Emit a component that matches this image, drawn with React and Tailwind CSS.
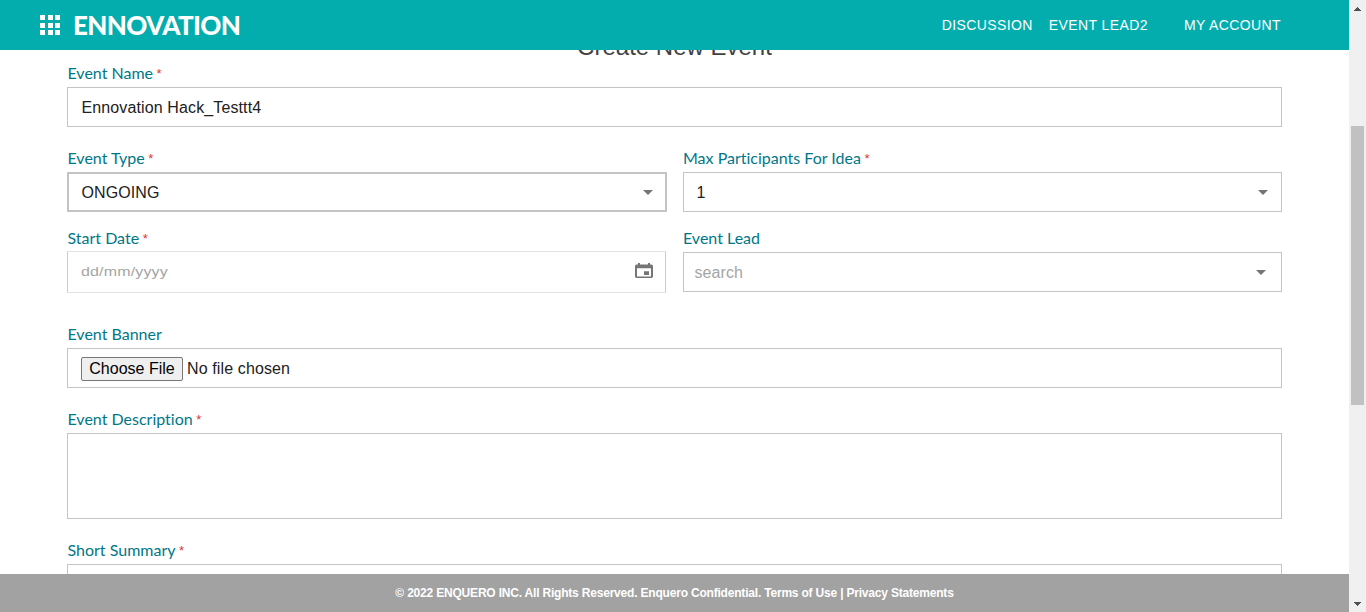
import React from "react";

function Label({ children, required, className = "" }) {
  return (
    <div className={`flex h-5 items-center whitespace-nowrap pl-[0.5px] font-['Lato',sans-serif] text-[16px] leading-5 text-[#007788] [font-variant-ligatures:none] ${className}`}>
      {children}
      {required && <span className="ml-[3.5px] pt-[2px] font-['Liberation_Sans',sans-serif] text-[13px] text-[#d9363e]">*</span>}
    </div>
  );
}

function Caret({ className = "" }) {
  return (
    <svg className={`h-[5px] w-[10px] shrink-0 ${className}`} viewBox="0 0 10 5">
      <path d="M0 0h10L5 5z" fill="#757575" />
    </svg>
  );
}

function CalendarIcon() {
  return (
    <svg className="mb-[3px] h-[15px] w-[18px] shrink-0" viewBox="3 1 18 20" preserveAspectRatio="none">
      <path
        d="M17 12h-5v5h5v-5zM16 1v2H8V1H6v2H5c-1.11 0-1.99.9-1.99 2L3 19c0 1.1.89 2 2 2h14c1.1 0 2-.9 2-2V5c0-1.1-.9-2-2-2h-1V1h-2zm3 18H5V8h14v11z"
        fill="#757575"
      />
    </svg>
  );
}

function Header() {
  return (
    <header className="z-10 flex h-[50px] shrink-0 items-center bg-[#03adad] pl-10 pr-[68px] text-white">
      <div className="grid grid-cols-[5px_5px_5px] grid-rows-[5px_5px_5px] gap-[2.5px]">
        {Array.from({ length: 9 }, (_, i) => (
          <span key={i} className="bg-white" />
        ))}
      </div>
      <div className="ml-[13px] pt-px font-['Lato',sans-serif] text-[26px] font-black leading-[49px] tracking-[-0.62px]">ENNOVATION</div>
      <nav className="ml-auto flex text-[14px] tracking-[0.4px]">
        <a>DISCUSSION</a>
        <a className="ml-4">EVENT LEAD2</a>
        <a className="ml-9">MY ACCOUNT</a>
      </nav>
    </header>
  );
}

function Scrollbar() {
  return (
    <div className="flex h-full w-[17px] shrink-0 flex-col items-center bg-[#f0f0f0]">
      <div className="flex h-[17px] items-center">
        <svg className="h-1 w-[7px]" viewBox="0 0 7 4" shapeRendering="crispEdges">
          <path d="M3 0h1v1h1v1h1v1h1v1H0V3h1V2h1V1h1z" fill="#505050" />
        </svg>
      </div>
      <div className="mt-[109px] h-[279px] w-[13px] bg-[#c1c1c1]" />
      <div className="mt-auto flex h-[17px] items-center">
        <svg className="h-1 w-[7px]" viewBox="0 0 7 4" shapeRendering="crispEdges">
          <path d="M0 0h7v1H6v1H5v1H4v1H3V3H2V2H1V1H0z" fill="#505050" />
        </svg>
      </div>
    </div>
  );
}

export default function App() {
  return (
    <div className="flex h-[612px] w-[1366px] overflow-hidden bg-white font-['Liberation_Sans',Arial,sans-serif] text-[16px] text-[#212121]">
      <div className="flex w-[1349px] flex-col">
        <Header />
        <main className="flex min-h-0 flex-1 flex-col overflow-hidden px-[67px]">
          <h1 className="-mt-[19px] h-8 shrink-0 text-center text-[24px] leading-[31px] text-[#424242]">
            Create New Event
          </h1>
          <Label required>Event Name</Label>
          <div className="mt-1 flex h-10 shrink-0 items-center border border-[#c4c4c4] px-[13.5px] pt-[2px] tracking-[0.12px]">Ennovation Hack_Testtt4</div>

          <div className="mt-[21px] grid shrink-0 grid-cols-2 gap-x-4">
            <div>
              <Label required>Event Type</Label>
              <div className="mt-1 flex h-10 items-center justify-between border-2 border-[#c4c4c4] pl-[12.5px] pr-3">
                <span className="pt-[2px] tracking-[0.1px]">ONGOING</span>
                <Caret />
              </div>
            </div>
            <div>
              <Label required>Max Participants For Idea</Label>
              <div className="mt-1 flex h-10 items-center justify-between border border-[#c4c4c4] pl-[13px] pr-[13px]">
                <span className="pt-[2px]">1</span>
                <Caret />
              </div>
            </div>
          </div>

          <div className="mt-4 grid shrink-0 grid-cols-2 gap-x-4">
            <div>
              <Label required>Start Date</Label>
              <div className="mt-[3px] flex h-[42px] w-[599px] items-center justify-between border border-x-[#cccccc] border-y-[#e2e2e2] pl-[13px] pr-3">
                <span className="origin-center scale-y-[0.8] tracking-[0.15px] text-[#a5a5a5]">dd/mm/yyyy</span>
                <CalendarIcon />
              </div>
            </div>
            <div>
              <Label>Event Lead</Label>
              <div className="mt-[4px] flex h-10 items-center justify-between border border-[#c4c4c4] pl-[11px] pr-[15px] text-[#a5a5a5]">
                <span className="pt-[2px] tracking-[0.1px]">search</span>
                <Caret />
              </div>
            </div>
          </div>

          <Label className="mt-[31px] shrink-0">Event Banner</Label>
          <div className="mt-[4px] flex h-10 shrink-0 items-center border border-[#c4c4c4] px-[13px] pt-[2px]">
            <button className="flex h-6 w-[102px] items-center justify-center rounded-[2px] border border-[#767676] bg-[#efefef] text-black">
              Choose File
            </button>
            <span className="ml-1 tracking-[0.12px]">No file chosen</span>
          </div>

          <Label required className="mt-[21px] shrink-0">Event Description</Label>
          <div className="mt-[4px] h-[86px] shrink-0 border border-[#c4c4c4]" />

          <Label required className="mt-[21px] shrink-0">Short Summary</Label>
          <div className="mt-[4px] h-10 shrink-0 border border-[#c4c4c4]" />
        </main>
        <footer className="flex h-[38px] shrink-0 items-center justify-center bg-[#a2a2a2] text-[12px] font-bold tracking-[-0.195px] text-white">
          © 2022 ENQUERO INC. All Rights Reserved. Enquero Confidential. Terms of Use | Privacy Statements
        </footer>
      </div>
      <Scrollbar />
    </div>
  );
}
